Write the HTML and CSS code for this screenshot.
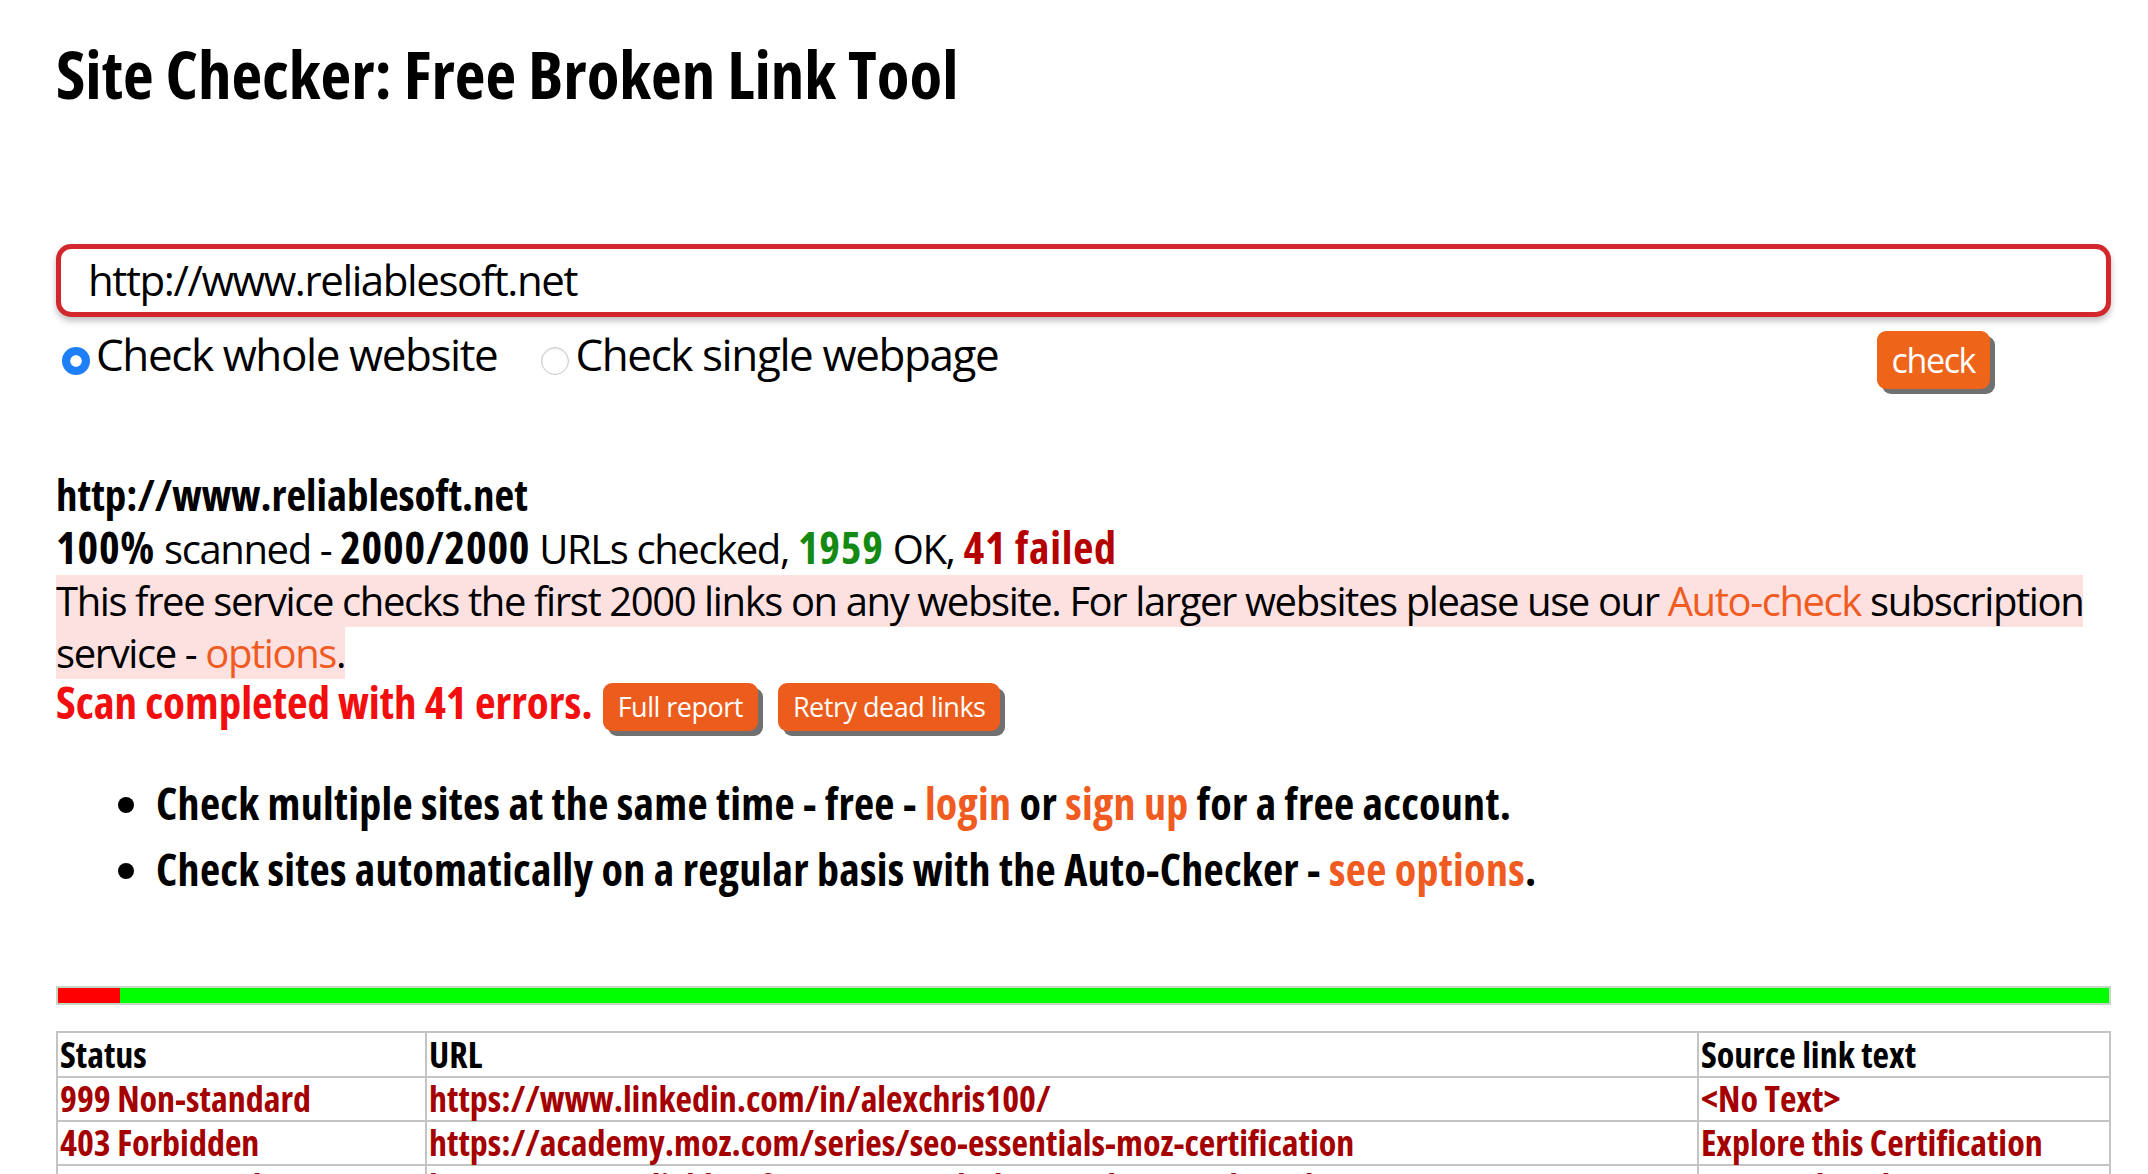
FILE: index.html
```html
<!DOCTYPE html>
<html lang="en">
<head>
<meta charset="utf-8">
<title>Site Checker: Free Broken Link Tool</title>
<link rel="stylesheet" href="styles.css">
</head>
<body>
<div class="page">
  <h1 class="title">Site Checker: Free Broken Link Tool</h1>

  <form class="check-form">
    <input class="url-input" type="text" value="http://www.reliablesoft.net">
    <div class="options-row">
      <label class="opt"><input type="radio" name="mode" class="radio" checked><span>Check whole website</span></label>
      <label class="opt"><input type="radio" name="mode" class="radio"><span>Check single webpage</span></label>
      <button type="button" class="btn btn-check">check</button>
    </div>
  </form>

  <div class="results">
    <div class="line site">http://www.reliablesoft.net</div>
    <div class="line"><b>100%</b> scanned - <b>2000/2000</b> URLs checked, <b class="ok">1959</b> OK, <b class="fail">41 failed</b></div>
    <div class="line"><span class="notice">This free service checks the first 2000 links on any website. For larger websites please use our <a class="link">Auto-check</a> subscription</span></div>
    <div class="line"><span class="notice">service - <a class="link">options</a>.</span></div>
    <div class="scan-row">
      <span class="scan-done">Scan completed with 41 errors.</span>
      <button type="button" class="btn btn-small">Full report</button>
      <button type="button" class="btn btn-small">Retry dead links</button>
    </div>
  </div>

  <ul class="tips">
    <li>Check multiple sites at the same time - free - <a class="link">login</a> or <a class="link">sign up</a> for a free account.</li>
    <li>Check sites automatically on a regular basis with the Auto-Checker - <a class="link">see options</a>.</li>
  </ul>

  <div class="progress">
    <div class="progress-fail" style="width:3%"></div>
    <div class="progress-ok"></div>
  </div>

  <table class="report">
    <colgroup>
      <col class="c-status">
      <col class="c-url">
      <col class="c-text">
    </colgroup>
    <thead>
      <tr><th>Status</th><th>URL</th><th>Source link text</th></tr>
    </thead>
    <tbody>
      <tr><td>999 Non-standard</td><td>https://www.linkedin.com/in/alexchris100/</td><td>&lt;No Text&gt;</td></tr>
      <tr><td>403 Forbidden</td><td>https://academy.moz.com/series/seo-essentials-moz-certification</td><td>Explore this Certification</td></tr>
      <tr><td>404 Not Found</td><td>https://www.reliablesoft.net/seo-tools/keyword-research-tool/</td><td>Keyword Tool</td></tr>
    </tbody>
  </table>
</div>
</body>
</html>
```

FILE: styles.css
```css
* { box-sizing: border-box; }

html, body {
  margin: 0;
  padding: 0;
  background: #ffffff;
}

body {
  font-family: "Open Sans", "Noto Sans", sans-serif;
  font-size: 40px;
  line-height: 52px;
  letter-spacing: -1.4px;
  color: #000000;
}

/* bold text uses the condensed cut */
b,
.title,
.site,
.scan-done,
.tips,
.report {
  font-weight: 700;
  font-stretch: 75%;
  letter-spacing: 0;
}

b {
  font-size: 44px;
  letter-spacing: 0.8px;
}

.page {
  padding: 0 37px 0 56px;
}

.title {
  margin: 38px 0 0;
  font-size: 67px;
  line-height: 70px;
}

.check-form {
  margin-top: 136px;
}

.url-input {
  display: block;
  width: 100%;
  height: 73px;
  border: 5px solid #d3272e;
  border-radius: 15px;
  padding: 0 0 2px 27px;
  font-family: inherit;
  font-size: 42px;
  letter-spacing: -1.4px;
  color: #000;
  box-shadow: 0 4px 6px rgba(0, 0, 0, 0.25);
  outline: none;
}

.options-row {
  display: flex;
  align-items: flex-start;
  margin-top: 11px;
  font-size: 44px;
}

.opt {
  display: flex;
  align-items: flex-end;
  margin-right: 38px;
}

.radio {
  appearance: none;
  -webkit-appearance: none;
  width: 28px;
  height: 28px;
  margin: 0 6px 5px 6px;
  border-radius: 50%;
  border: 1px solid #c9c9c9;
  background: #ffffff;
  box-shadow: inset 0 1px 2px rgba(0, 0, 0, 0.12);
  flex: none;
}

.radio:checked {
  border: none;
  background: radial-gradient(circle, #ffffff 0 27%, #1f7ff6 31%);
  box-shadow: none;
}

.btn {
  border: none;
  background: #ec5d1d;
  color: #ffffff;
  font-family: inherit;
  border-radius: 9px;
  box-shadow: 5px 5px 0 #707070;
  cursor: pointer;
}

.btn-check {
  margin-left: auto;
  margin-right: 121px;
  margin-top: 3px;
  height: 58px;
  padding: 0 15px;
  font-size: 34px;
  letter-spacing: -1.4px;
  line-height: 58px;
  background: #ee6419;
}

.results {
  margin-top: 80px;
}

.line {
  white-space: nowrap;
}

.site { font-size: 43px; }

.ok { color: #148a14; }
.fail { color: #b50000; }

.notice {
  display: inline-block;
  background: #fde1e1;
  line-height: 52px;
  vertical-align: top;
}

.link {
  color: #f05b22;
  text-decoration: none;
}

.scan-row {
  display: flex;
  align-items: flex-start;
  height: 52px;
}

.scan-done {
  color: #f20e0e;
  font-size: 45px;
  line-height: 46px;
  margin-right: 10px;
}

.btn-small {
  height: 48px;
  padding: 0 15px;
  font-size: 27px;
  letter-spacing: -0.5px;
  line-height: 48px;
  margin-right: 20px;
  margin-top: 4px;
}

.tips {
  margin: 46px 0 0;
  padding-left: 100px;
  font-size: 44px;
  letter-spacing: 0.3px;
}

.tips li {
  line-height: 52px;
  margin-bottom: 14px;
}

.progress {
  display: flex;
  margin-top: 91px;
  height: 19px;
  border: 2px solid #c6d6c6;
}

.progress-fail { background: #ff0000; }
.progress-ok { flex: 1; background: #00ff00; }

.report {
  width: 100%;
  table-layout: fixed;
  margin-top: 26px;
  border-collapse: collapse;
  font-size: 36px;
  line-height: 40px;
}

.c-status { width: 369px; }
.c-text { width: 412px; }

.report th,
.report td {
  border: 2px solid #c4c4c4;
  padding: 0 2px;
  text-align: left;
  white-space: nowrap;
}

.report th { color: #000000; height: 45px; }
.report td { color: #a50000; height: 44px; }
```
